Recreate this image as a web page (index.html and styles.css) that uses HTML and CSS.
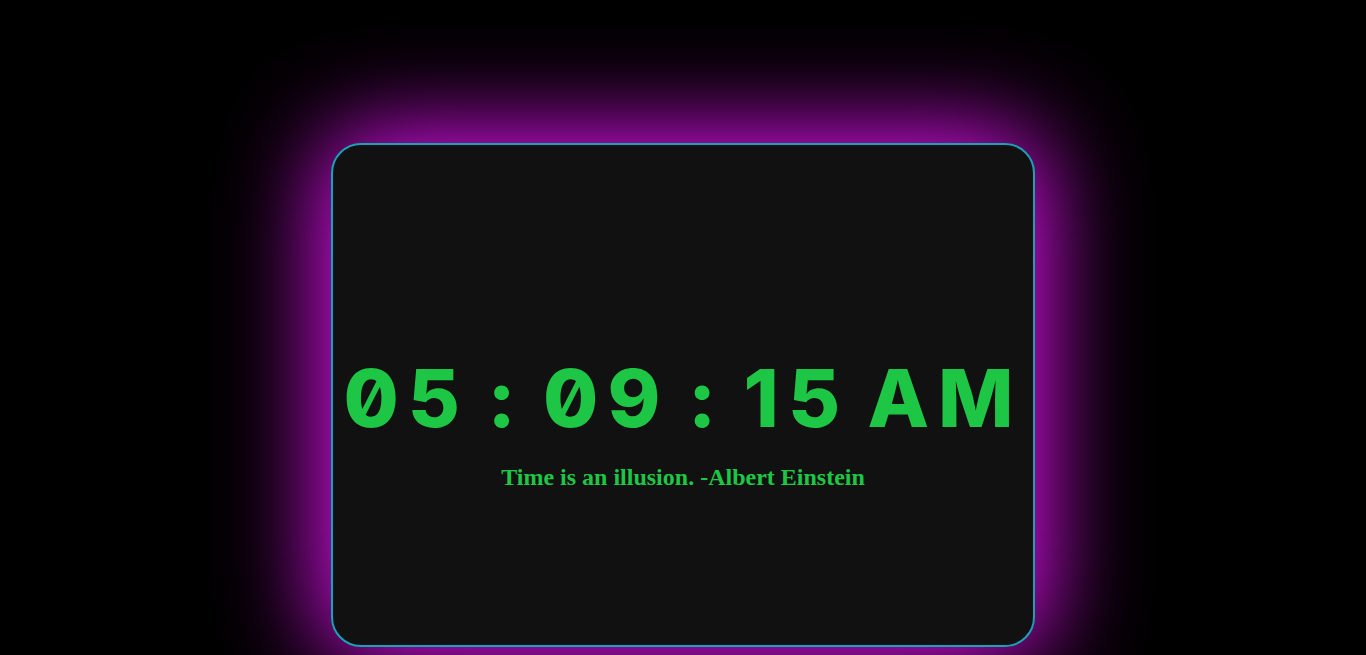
FILE: index.html
```html
<!DOCTYPE html>
<html lang="en">
<head>
<meta charset="utf-8">
<title>Digital Clock</title>
<link rel="stylesheet" href="styles.css">
</head>
<body>
<main class="stage">
  <section class="clock-card">
    <div class="time">05 : 09 : 15 AM</div>
    <p class="quote">Time is an illusion. -Albert Einstein</p>
  </section>
</main>
</body>
</html>
```

FILE: styles.css
```css
html, body {
  margin: 0;
  padding: 0;
  background: #000;
  height: 100%;
  overflow: hidden;
}

.stage {
  display: flex;
  justify-content: center;
  padding-top: 143px;
}

.clock-card {
  box-sizing: border-box;
  width: 704px;
  height: 504px;
  background: #111111;
  border: 2px solid #17a2b8;
  border-radius: 30px;
  box-shadow: 0 0 100px 8px #ee12ff;
  display: flex;
  flex-direction: column;
  align-items: center;
  padding-top: 205px;
}

.time {
  font-family: Inter, "DejaVu Sans", sans-serif;
  font-weight: 800;
  font-size: 80px;
  line-height: 96px;
  color: #1ec645;
  font-feature-settings: "zero" 1;
  letter-spacing: 9px;
  word-spacing: -8px;
  white-space: nowrap;
}

.quote {
  margin: 18px 0 0;
  font-family: "Liberation Serif", "Times New Roman", serif;
  font-weight: bold;
  font-size: 24px;
  color: #1ec645;
}
```
